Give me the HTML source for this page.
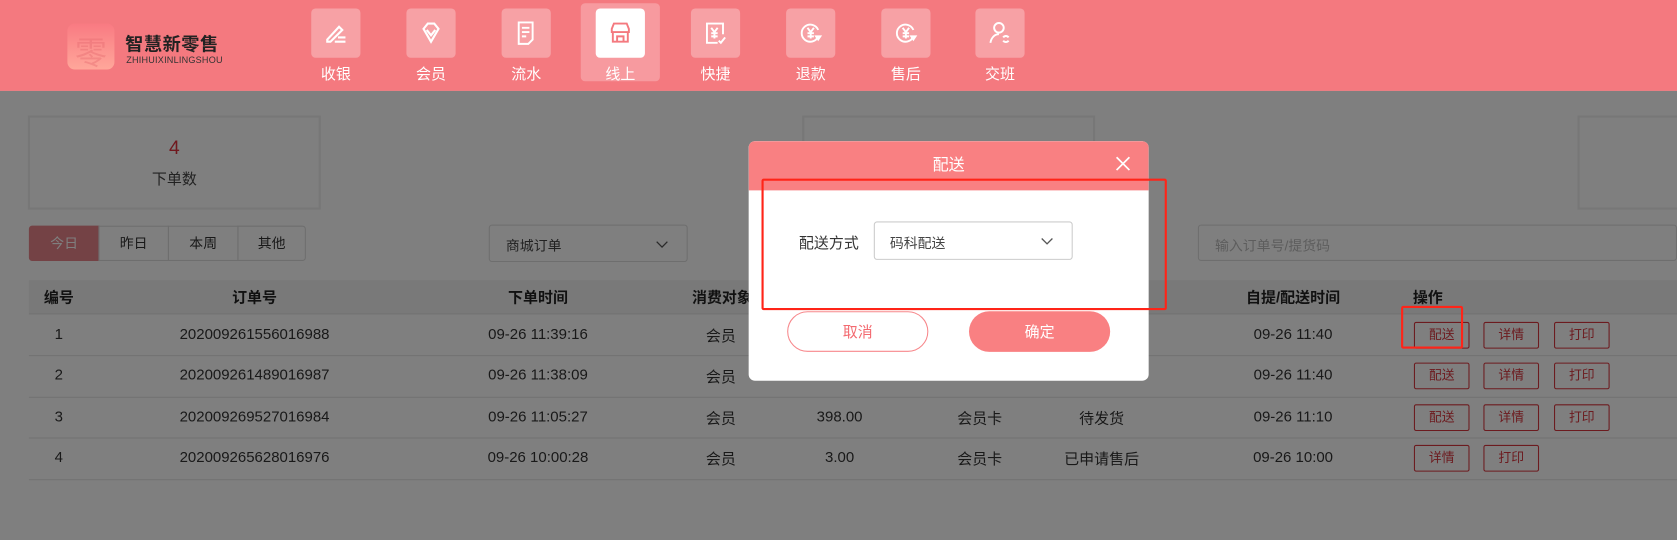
<!DOCTYPE html>
<html><head><meta charset="utf-8"><style>
*{margin:0;padding:0;box-sizing:border-box}
html,body{width:1677px;height:540px;overflow:hidden;background:#fff;font-family:"Liberation Sans","Noto Sans CJK SC",sans-serif}
#w{position:absolute;left:0;top:0;width:1568px;height:505px;transform:scale(1.06952);transform-origin:0 0;background:#fff}
.a{position:absolute}
.hdr{left:0;top:0;width:1568px;height:85px;background:#f4797f}
.nav{width:46px;height:46px;border-radius:4px;background:rgba(255,255,255,.3);top:8px}
.nav svg{position:absolute;left:11px;top:11px}
.lbl{top:59px;width:60px;text-align:center;color:#fff;font-size:14px}
.card{border:2px solid #eee;background:#fff;top:108px;height:88px}
.t{font-size:14px;color:#444;text-align:center}
.seg{top:211px;height:33px;border:1px solid #ddd;font-size:13px;color:#333;text-align:center;line-height:31px}
.row{left:27px;width:1541px;border-bottom:1px solid #e4e4e4;height:39px}
.c{position:absolute;font-size:14px;color:#333;text-align:center;transform:translateX(-50%);white-space:nowrap}
.ob{position:absolute;width:52px;height:25px;border:1px solid #d9363e;color:#d9363e;font-size:12px;text-align:center;line-height:23px;border-radius:2px}
#ov{left:0;top:85px;width:1568px;height:420px;background:rgba(0,0,0,.5)}
</style></head><body><div id="w">
<div class="a hdr"></div>
<div class="a" style="left:63px;top:22px;width:44px;height:43px;border-radius:7px;background:linear-gradient(#f97a82,#ffa79a)"></div>
<div class="a" style="left:70px;top:25px;font-size:30px;color:#e2646b;opacity:.35">零</div>
<div class="a" style="left:117px;top:27px;font-size:17px;color:#222;letter-spacing:0.5px;font-weight:bold">智慧新零售</div>
<div class="a" style="left:118px;top:51px;font-size:8.5px;color:#333;letter-spacing:0.2px">ZHIHUIXINLINGSHOU</div>
<div class="a" style="left:543px;top:3px;width:74px;height:73px;border-radius:4px;background:rgba(255,255,255,.25)"></div>
<div class="a nav" style="left:291px"><svg width="24" height="24" fill="none" stroke="#fff" stroke-width="2"><path d="M4 18 L15 6 L18 9 L7 20 L4 20Z"/><path d="M11 20h10M14 16h7"/></svg></div>
<div class="a nav" style="left:380px"><svg width="24" height="24" fill="none" stroke="#fff" stroke-width="2"><path d="M5 8 L9 3 L15 3 L19 8 L12 20Z"/><path d="M8 9 L12 14 L16 9"/></svg></div>
<div class="a nav" style="left:469px"><svg width="24" height="24" fill="none" stroke="#fff" stroke-width="1.8"><path d="M5 2h13v16l-4 4H5Z"/><path d="M8 7h7M8 11h7M8 15h4"/></svg></div>
<div class="a nav" style="left:557px;background:#fff"><svg width="24" height="24" fill="none" stroke="#f4797f" stroke-width="1.8"><path d="M4 8 L6 3h12l2 5v3H4Z"/><path d="M5 11v9h14v-9M9 20v-5h6v5"/></svg></div>
<div class="a nav" style="left:646px"><svg width="24" height="24" fill="none" stroke="#fff" stroke-width="1.8"><path d="M14 21H4V3h15v10"/><path d="M8 7l3 4 3-4M11 11v6M8 12h6M8 15h6M15 19l2 2 4-5"/></svg></div>
<div class="a nav" style="left:735px"><svg width="24" height="24" fill="none" stroke="#fff" stroke-width="1.8"><path d="M19 15A8 8 0 1 1 19 9"/><path d="M9 7l3 4 3-4M12 11v6M9 12h6M9 15h6M17 15h4l-2 3Z"/></svg></div>
<div class="a nav" style="left:824px"><svg width="24" height="24" fill="none" stroke="#fff" stroke-width="1.8"><path d="M19 15A8 8 0 1 1 19 9"/><path d="M9 7l3 4 3-4M12 11v6M9 12h6M9 15h6M17 15h4l-2 3Z"/></svg></div>
<div class="a nav" style="left:912px"><svg width="24" height="24" fill="none" stroke="#fff" stroke-width="1.8"><circle cx="11" cy="7" r="4.5"/><path d="M3 21c1-5 4-8 8-8M15 16a3 3 0 0 1 5 0M20 19a3 3 0 0 1-5 0"/></svg></div>
<div class="a lbl" style="left:284px">收银</div><div class="a lbl" style="left:373px">会员</div><div class="a lbl" style="left:462px">流水</div><div class="a lbl" style="left:550px">线上</div><div class="a lbl" style="left:639px">快捷</div><div class="a lbl" style="left:728px">退款</div><div class="a lbl" style="left:817px">售后</div><div class="a lbl" style="left:905px">交班</div>

<div class="a card" style="left:26px;width:274px"><div class="t" style="margin-top:18px;font-size:18px;color:#e0313c">4</div><div class="t" style="margin-top:8px">下单数</div></div>
<div class="a card" style="left:750px;width:274px"></div>
<div class="a card" style="left:1475px;width:120px"></div>
<div class="a seg" style="left:27px;width:66px;background:#e8858a;border-color:#e8858a;color:#fff;border-radius:3px 0 0 3px">今日</div>
<div class="a seg" style="left:92px;width:66px">昨日</div>
<div class="a seg" style="left:157px;width:66px">本周</div>
<div class="a seg" style="left:222px;width:64px;border-radius:0 3px 3px 0">其他</div>
<div class="a" style="left:457px;top:210px;width:186px;height:35px;border:1px solid #ddd;border-radius:3px;font-size:13px;color:#444;padding:8px 15px">商城订单<svg class="a" style="left:155px;top:14px" width="12" height="8" fill="none" stroke="#555" stroke-width="1.2"><path d="M1 1l5 5 5-5"/></svg></div>
<div class="a" style="left:1120px;top:210px;width:448px;height:34px;border:1px solid #ddd;border-radius:3px;font-size:13px;color:#bbb;padding:8px 15px">输入订单号/提货码</div>

<div class="a" style="left:27px;top:262px;width:1541px;height:32px;background:#f3f3f3;border-bottom:1px solid #e4e4e4"></div>
<div class="a" style="left:0;top:268px;width:1568px;height:20px;font-weight:bold">
<span class="c" style="left:55px;color:#222;font-weight:bold">编号</span><span class="c" style="left:238px;color:#222;font-weight:bold">订单号</span><span class="c" style="left:503px;color:#222;font-weight:bold">下单时间</span><span class="c" style="left:675px;color:#222;font-weight:bold">消费对象</span><span class="c" style="left:1209px;color:#222;font-weight:bold">自提/配送时间</span><span class="c" style="left:1335px;color:#222;font-weight:bold">操作</span></div>
<div class="a row" style="top:294px"></div><div class="a row" style="top:333px"></div><div class="a row" style="top:371px"></div><div class="a row" style="top:410px"></div>
<div class="a" style="left:0;top:304px;width:1568px"><span class="c" style="left:55px">1</span><span class="c" style="left:238px">202009261556016988</span><span class="c" style="left:503px">09-26 11:39:16</span><span class="c" style="left:674px">会员</span><span class="c" style="left:1209px">09-26 11:40</span></div>
<div class="a" style="left:0;top:342px;width:1568px"><span class="c" style="left:55px">2</span><span class="c" style="left:238px">202009261489016987</span><span class="c" style="left:503px">09-26 11:38:09</span><span class="c" style="left:674px">会员</span><span class="c" style="left:1209px">09-26 11:40</span></div>
<div class="a" style="left:0;top:381px;width:1568px"><span class="c" style="left:55px">3</span><span class="c" style="left:238px">202009269527016984</span><span class="c" style="left:503px">09-26 11:05:27</span><span class="c" style="left:674px">会员</span><span class="c" style="left:785px">398.00</span><span class="c" style="left:916px">会员卡</span><span class="c" style="left:1030px">待发货</span><span class="c" style="left:1209px">09-26 11:10</span></div>
<div class="a" style="left:0;top:419px;width:1568px"><span class="c" style="left:55px">4</span><span class="c" style="left:238px">202009265628016976</span><span class="c" style="left:503px">09-26 10:00:28</span><span class="c" style="left:674px">会员</span><span class="c" style="left:785px">3.00</span><span class="c" style="left:916px">会员卡</span><span class="c" style="left:1030px">已申请售后</span><span class="c" style="left:1209px">09-26 10:00</span></div>
<div class="ob" style="left:1322px;top:301px">配送</div><div class="ob" style="left:1387px;top:301px">详情</div><div class="ob" style="left:1453px;top:301px">打印</div>
<div class="ob" style="left:1322px;top:339px">配送</div><div class="ob" style="left:1387px;top:339px">详情</div><div class="ob" style="left:1453px;top:339px">打印</div>
<div class="ob" style="left:1322px;top:378px">配送</div><div class="ob" style="left:1387px;top:378px">详情</div><div class="ob" style="left:1453px;top:378px">打印</div>
<div class="ob" style="left:1322px;top:416px">详情</div><div class="ob" style="left:1387px;top:416px">打印</div>

<div class="a" id="ov"></div>

<div class="a" style="left:700px;top:132px;width:374px;height:224px;background:#fff;border-radius:6px;overflow:hidden">
<div style="height:46px;background:#f98082;color:#fff;text-align:center;font-size:15px;line-height:46px">配送</div>
<svg class="a" style="left:343px;top:14px" width="14" height="14" stroke="#fff" stroke-width="1.6"><path d="M1 1L13 13M13 1L1 13"/></svg>
<div class="a" style="left:47px;top:85px;font-size:14px;color:#333">配送方式</div>
<div class="a" style="left:117px;top:75px;width:186px;height:36px;border:1px solid #ccc;border-radius:3px;font-size:13px;color:#444;padding:9px 14px">码科配送<svg class="a" style="left:155px;top:14px" width="12" height="8" fill="none" stroke="#555" stroke-width="1.2"><path d="M1 1l5 5 5-5"/></svg></div>
<div class="a" style="left:36px;top:159px;width:132px;height:38px;border:1px solid #f7888c;border-radius:19px;color:#f36a70;font-size:14px;text-align:center;line-height:36px">取消</div>
<div class="a" style="left:206px;top:159px;width:132px;height:38px;background:#f98082;border-radius:19px;color:#fff;font-size:14px;text-align:center;line-height:38px">确定</div>
</div>
<div class="a" style="left:712px;top:167px;width:379px;height:123px;border:2px solid #ff2418;border-radius:2px"></div>
<div class="a" style="left:1310px;top:286px;width:58px;height:40px;border:2px solid #ff2418;border-radius:2px"></div>
</div></body></html>
